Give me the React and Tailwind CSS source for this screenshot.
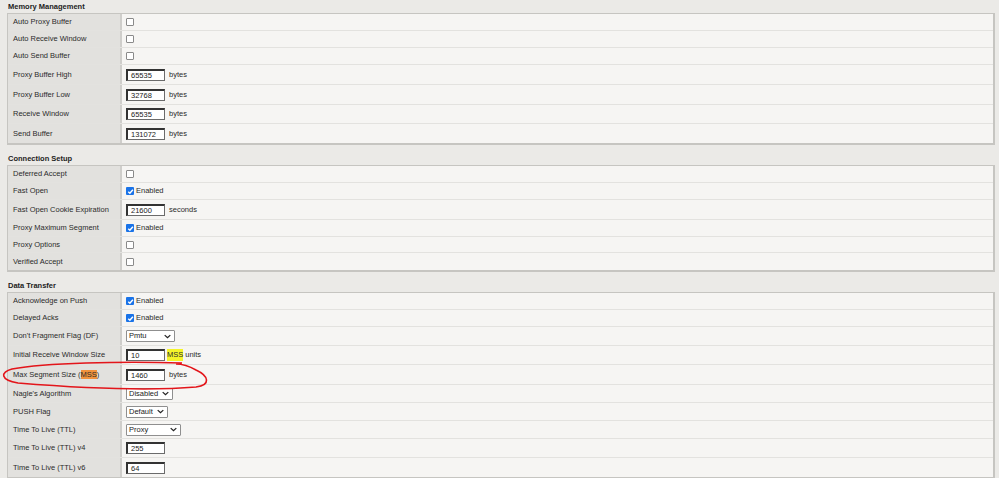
import React from 'react';

const font = { fontFamily: '"Liberation Sans", Arial, sans-serif' };

const Check = ({ checked }) =>
  checked ? (
    <span className="inline-flex items-center shrink-0">
      <span className="w-[8px] h-[8px] rounded-[1px] bg-[#1a73e8] flex items-center justify-center">
        <svg width="7" height="7" viewBox="0 0 10 10">
          <path d="M1.8 5.4 L4.1 7.6 L8.4 2.4" fill="none" stroke="#fff" strokeWidth="2" />
        </svg>
      </span>
      <span className="ml-[2px]">Enabled</span>
    </span>
  ) : (
    <span className="w-[8px] h-[8px] rounded-[1px] border border-[#8a8a8a] bg-white inline-block shrink-0" />
  );

const Field = ({ value, unit }) => (
  <span className="inline-flex items-center shrink-0 whitespace-nowrap">
    <span className="w-[39px] h-[12px] shrink-0 border border-[#6b6b6b] border-t-2 border-l-2 border-t-[#333] border-l-[#333] bg-white pl-[3px] leading-[9px] text-[#222]">
      {value}
    </span>
    {unit && <span className="ml-[4px]">{unit}</span>}
  </span>
);

const Picker = ({ value, width }) => (
  <span
    className="h-[12px] shrink-0 border border-[#8f8f8f] rounded-[1px] bg-white flex items-center justify-between pl-[2px] pr-[3px] text-[#222]"
    style={{ width }}
  >
    <span>{value}</span>
    <svg width="7" height="5" viewBox="0 0 10 7">
      <path d="M1 1.5 L5 5.2 L9 1.5" fill="none" stroke="#222" strokeWidth="1.8" />
    </svg>
  </span>
);

const sections = [
  {
    title: 'Memory Management',
    rows: [
      ['Auto Proxy Buffer', 17, <Check />],
      ['Auto Receive Window', 17, <Check />],
      ['Auto Send Buffer', 17, <Check />],
      ['Proxy Buffer High', 20, <Field value="65535" unit="bytes" />],
      ['Proxy Buffer Low', 20, <Field value="32768" unit="bytes" />],
      ['Receive Window', 19, <Field value="65535" unit="bytes" />],
      ['Send Buffer', 19, <Field value="131072" unit="bytes" />],
    ],
  },
  {
    title: 'Connection Setup',
    rows: [
      ['Deferred Accept', 17, <Check />],
      ['Fast Open', 17, <Check checked />],
      ['Fast Open Cookie Expiration', 20, <Field value="21600" unit="seconds" />],
      ['Proxy Maximum Segment', 17, <Check checked />],
      ['Proxy Options', 16, <Check />],
      ['Verified Accept', 17, <Check />],
    ],
  },
  {
    title: 'Data Transfer',
    rows: [
      ['Acknowledge on Push', 17, <Check checked />],
      ['Delayed Acks', 17, <Check checked />],
      ["Don't Fragment Flag (DF)", 19, <Picker value="Pmtu" width={49} />],
      [
        'Initial Receive Window Size',
        19,
        <span className="inline-flex items-center whitespace-nowrap">
          <Field value="10" />
          <span className="ml-[2px] bg-[#f4f42a]">MSS</span>
          <span className="ml-[2px]">units</span>
        </span>,
      ],
      [
        <span>
          Max Segment Size (<span className="bg-[#f0923c]">MSS</span>)
        </span>,
        20,
        <Field value="1460" unit="bytes" />,
      ],
      ["Nagle's Algorithm", 18, <Picker value="Disabled" width={47} />],
      ['PUSH Flag', 18, <Picker value="Default" width={42} />],
      ['Time To Live (TTL)', 18, <Picker value="Proxy" width={55} />],
      ['Time To Live (TTL) v4', 19, <Field value="255" />],
      ['Time To Live (TTL) v6', 19, <Field value="64" />],
    ],
  },
];

export default function App() {
  return (
    <div className="relative w-[999px] h-[478px] bg-[#ebeae7] overflow-hidden text-[7.5px] text-[#2b2b2b]" style={font}>
      <div className="pl-[7px] pr-[4px]">
        {sections.map((s, i) => (
          <div key={i} className={i ? 'mt-[7px]' : ''}>
            <div className="h-[13px] leading-[13px] pl-[1px] font-bold text-[#222]">{s.title}</div>
            <div className="border border-[#c6c5c1] border-r-2 border-b-2 bg-[#f6f5f3]">
              {s.rows.map(([label, h, value], j) => (
                <div
                  key={j}
                  className={'flex ' + (j < s.rows.length - 1 ? 'border-b border-[#e3e2df]' : '')}
                  style={{ height: h }}
                >
                  <div className="w-[114px] shrink-0 bg-[#e2e1de] border-r-2 border-[#cfcecb] pl-[5px] flex items-center whitespace-nowrap">
                    {label}
                  </div>
                  <div className="flex-1 pl-[4px] flex items-center">{value}</div>
                </div>
              ))}
            </div>
          </div>
        ))}
      </div>
      <svg className="absolute left-0 top-0 pointer-events-none" width="999" height="478">
        <path
          d="M182 363 C120 361 45 363 12 369 C0 372 0 380 18 383 C80 388 150 391 196 387 C211 385 209 376 196 370 C189 366 184 364 176 364"
          fill="none"
          stroke="#e3151a"
          strokeWidth="1.6"
        />
      </svg>
    </div>
  );
}
